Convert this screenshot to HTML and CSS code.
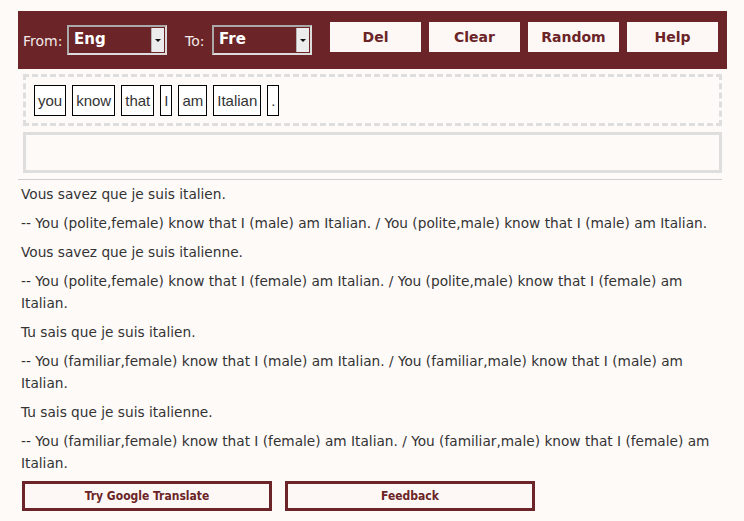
FILE: index.html
```html
<!DOCTYPE html>
<html lang="en">
<head>
  <meta charset="UTF-8" />
  <title>Word Translator</title>
  <link rel="stylesheet" href="styles.css">
</head>
<body>
  <div class="app">
    <div class="toolbar">
      <label class="lang-label">From:</label>
      <div class="select"><span>Eng</span><span class="arrow"></span></div>
      <label class="lang-label to">To:</label>
      <div class="select"><span>Fre</span><span class="arrow"></span></div>
      <button class="tool-btn first">Del</button>
      <button class="tool-btn">Clear</button>
      <button class="tool-btn">Random</button>
      <button class="tool-btn">Help</button>
    </div>

    <div class="words">
      <span class="word">you</span>
      <span class="word">know</span>
      <span class="word">that</span>
      <span class="word">I</span>
      <span class="word">am</span>
      <span class="word">Italian</span>
      <span class="word">.</span>
    </div>

    <div class="input-box"></div>

    <div class="results">
      <p>Vous savez que je suis italien.</p>
      <p>-- You (polite,female) know that I (male) am Italian. / You (polite,male) know that I (male) am Italian.</p>
      <p>Vous savez que je suis italienne.</p>
      <p>-- You (polite,female) know that I (female) am Italian. / You (polite,male) know that I (female) am Italian.</p>
      <p>Tu sais que je suis italien.</p>
      <p>-- You (familiar,female) know that I (male) am Italian. / You (familiar,male) know that I (male) am Italian.</p>
      <p>Tu sais que je suis italienne.</p>
      <p>-- You (familiar,female) know that I (female) am Italian. / You (familiar,male) know that I (female) am Italian.</p>
    </div>

    <div class="actions">
      <button class="action-btn">Try Google Translate</button>
      <button class="action-btn">Feedback</button>
    </div>
  </div>
</body>
</html>
```

FILE: styles.css
```css
body {
  margin: 0;
  background: #fdfaf8;
  font-family: 'DejaVu Sans', sans-serif;
  color: #333;
}

.app {
  width: 709px;
  margin: 11px 0 0 18px;
}

.toolbar {
  display: flex;
  align-items: flex-start;
  height: 58px;
  padding: 0 9px 0 5px;
  box-sizing: border-box;
  background: #6b2427;
}

.lang-label {
  margin-top: 22px;
  width: 44px;
  color: #f3eaea;
  font-size: 14px;
}

.lang-label.to {
  margin-left: 18px;
  width: 27px;
}

.select {
  display: flex;
  justify-content: space-between;
  width: 100px;
  height: 30px;
  margin-top: 14px;
  box-sizing: border-box;
  border: 2px solid #a9a9a9;
  border-bottom-color: #dcdcdc;
  border-right-color: #dcdcdc;
  color: #fff;
  font-size: 15px;
  font-weight: bold;
}

.select span:first-child {
  padding: 3px 0 0 5px;
}

.arrow {
  position: relative;
  width: 12px;
  margin: 1px 1px 1px 0;
  background: #ececec;
  border-left: 1px solid #b5b5b5;
}

.arrow::after {
  content: "";
  position: absolute;
  left: 3px;
  top: 11px;
  border-left: 3px solid transparent;
  border-right: 3px solid transparent;
  border-top: 3px solid #111;
}

.tool-btn {
  width: 91px;
  height: 30px;
  margin: 11px 0 0 8px;
  padding: 0;
  border: none;
  background: #fdf8f6;
  color: #6b2427;
  font-family: 'DejaVu Sans', sans-serif;
  font-size: 14px;
  font-weight: bold;
}

.tool-btn.first {
  margin-left: 18px;
}

.words {
  display: flex;
  gap: 6px;
  height: 52px;
  margin: 5px 5px 0;
  padding: 8px;
  box-sizing: border-box;
  border: 3px dashed #dedede;
}

.word {
  height: 31px;
  line-height: 29px;
  padding: 0 3px;
  box-sizing: border-box;
  border: 1px solid #000;
  background: #fff;
  font-family: 'Liberation Sans', Arial, sans-serif;
  font-size: 15px;
}

.input-box {
  height: 41px;
  margin: 6px 5px 0;
  box-sizing: border-box;
  border: 3px solid #dedede;
}

.results {
  margin: 6px 5px 0 0;
  padding: 3px 0 0 3px;
  border-top: 1px solid #cfcfcf;
  font-size: 13.7px;
  line-height: 22px;
}

.results p {
  margin: 0 0 7px;
}

.actions {
  display: flex;
  gap: 13px;
  margin: 4px 0 0 4px;
}

.action-btn {
  width: 250px;
  height: 30px;
  padding: 0;
  border: 3px solid #6b2427;
  background: #fdf8f6;
  color: #6b2427;
  font-family: 'DejaVu Sans Condensed', sans-serif;
  font-size: 12px;
  font-weight: bold;
}
```
